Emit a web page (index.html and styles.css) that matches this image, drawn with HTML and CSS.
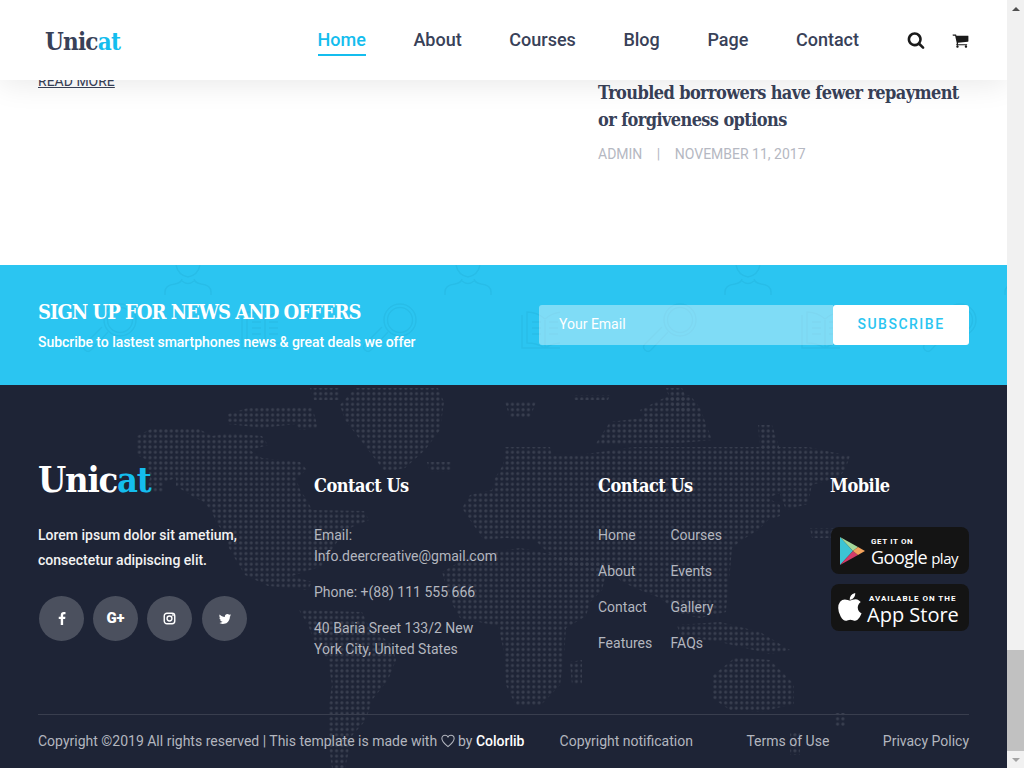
FILE: index.html
```html
<!DOCTYPE html>
<html lang="en">
<head>
    <meta charset="UTF-8">
    <title>Unicat</title>
    <link rel="stylesheet" href="styles.css">
</head>
<body>
<div class="window">
    <div class="page">
        <header class="top">
            <a class="logo">Unic<span>at</span></a>
            <ul class="nav">
                <li class="current">Home</li>
                <li>About</li>
                <li>Courses</li>
                <li>Blog</li>
                <li>Page</li>
                <li>Contact</li>
            </ul>
            <div class="top-icons">
                <svg class="ico-search" viewBox="0 0 1792 1792"><path d="M1216 832q0-185-131.500-316.500t-316.500-131.500-316.500 131.500-131.500 316.500 131.500 316.500 316.500 131.500 316.500-131.500 131.500-316.500zm512 832q0 52-38 90t-90 38q-54 0-90-38l-343-342q-179 124-399 124-143 0-273.500-55.500t-225-150-150-225-55.500-273.500 55.500-273.500 150-225 225-150 273.500-55.500 273.500 55.500 225 150 150 225 55.500 273.500q0 220-124 399l343 343q37 37 37 90z"/></svg>
                <svg class="ico-cart" viewBox="0 0 1792 1792"><path d="M704 1536q0 52-38 90t-90 38-90-38-38-90 38-90 90-38 90 38 38 90zm896 0q0 52-38 90t-90 38-90-38-38-90 38-90 90-38 90 38 38 90zm128-1088v512q0 24-16.500 42.500t-40.500 21.500l-1044 122q13 60 13 70 0 16-24 64h920q26 0 45 19t19 45-19 45-45 19h-1024q-26 0-45-19t-19-45q0-11 8-31.500t16-36 21.500-40 15.500-29.500l-177-823h-204q-26 0-45-19t-19-45 19-45 45-19h256q16 0 28.500 6.500t19.500 15.500 13 24.500 8 26 5.500 29.500 4.500 26h1201q26 0 45 19t19 45z"/></svg>
            </div>
        </header>

        <section class="news">
            <div class="news-left"><a class="more">READ MORE</a></div>
            <div class="news-right">
                <h3>Troubled borrowers have fewer repayment or forgiveness options</h3>
                <div class="meta"><span>ADMIN</span><span>|</span><span>NOVEMBER 11, 2017</span></div>
            </div>
        </section>

        <section class="signup">
            <svg class="signup-bg" width="1007" height="120">
                <defs>
                    <pattern id="tile" patternUnits="userSpaceOnUse" width="280" height="120">
                        <g fill="none" stroke="#27bde8" stroke-width="1.500">
                            <!-- person -->
                            <path d="M165 30v-3q0-7 10-8 6-1 7-5M211 30v-3q0-7-10-8-6-1-7-5M182 16q6 5 12 0M176 0q2 10 12 12q10-2 12-12"/>
                            <!-- lens -->
                            <circle cx="120" cy="55" r="16"/>
                            <circle cx="120" cy="55" r="12.500"/>
                            <path d="M108 67l-17 18q-3 3-6 0t0-6l17-17"/>
                            <!-- book -->
                            <path d="M242 50v33h46V50M265 55v28M247 78V47q10 0 18 7q8-7 18-7v31q-10 0-18 5q-8-5-18-5z"/>
                            <path d="M252 57h9M252 63h9M252 69h9M269 57h9M269 63h9M269 69h9"/>
                        </g>
                    </pattern>
                </defs>
                <rect width="1007" height="120" fill="url(#tile)"/>
            </svg>
            <div class="signup-text">
                <h2>SIGN UP FOR NEWS AND OFFERS</h2>
                <p>Subcribe to lastest smartphones news &amp; great deals we offer</p>
            </div>
            <form class="signup-form">
                <div class="email">Your Email</div>
                <div class="btn">SUBSCRIBE</div>
            </form>
        </section>

        <footer class="foot">
            <svg class="map" width="1007" height="383" viewBox="0 385 1007 383">
                <defs>
                    <pattern id="dots" patternUnits="userSpaceOnUse" x="-1.900" y="1.900" width="5.330" height="5.330">
                        <circle cx="2.665" cy="2.665" r="1.550" fill="#393f50"/>
                    </pattern>
                </defs>
                <g fill="url(#dots)">
                    <!-- north america -->
                    <path d="M151 429L199 429L212 436L228 433L262 436L268 445L250 450L262 458L300 462L307 470L296 478L300 490L307 500L312 510L364 511L369 520L352 527L340 538L330 552L322 566L292 576L312 582L308 590L268 586L245 575L237 562L229 548L224 533L216 522L212 512L204 502L192 496L176 486L176 478L164 482L163 492L146 492L150 478L147 460L137 455L137 436z"/>
                    <!-- arctic islands -->
                    <path d="M248 408L312 406L318 428L300 430L296 424L262 428L228 424L228 414z"/>
                    <path d="M310 388L340 388L340 400L314 400z"/>
                    <!-- greenland -->
                    <path d="M355 388L438 388L444 402L440 430L425 450L405 468L385 472L372 455L345 420L340 405z"/>
                    <path d="M427 462L452 462L450 472L430 472z"/>
                    <!-- south america -->
                    <path d="M299 610L362 612L368 625L392 645L396 660L388 680L372 700L366 720L350 738L348 755L345 768L332 768L328 740L328 710L332 685L328 660L314 640L308 625z"/>
                    <!-- europe and asia -->
                    <path d="M505 447L550 447L552 456L572 456L600 452L634 447L808 447L850 456L845 470L838 478L800 488L782 492L768 498L780 505L780 516L768 520L758 530L742 540L732 548L730 570L728 590L726 612L700 618L680 614L660 598L640 590L622 582L610 570L596 572L560 562L545 550L535 540L505 538L484 540L470 520L462 508L470 495L492 490L495 478L503 465z"/>
                    <path d="M810 528L852 528L850 538L812 538z"/>
                    <path d="M780 494L812 484L808 504L786 510z"/>
                    <path d="M595 445L610 422L650 417L660 445z"/>
                    <path d="M640 410L670 395L690 395L700 408L712 440L660 445z"/>
                    <path d="M758 425L772 425L780 450L760 450z"/>
                    <path d="M572 395L610 395L608 400L575 400z"/>
                    <path d="M666 388L682 388L692 412L674 412z"/>
                    <path d="M505 402L536 402L530 418L510 418z"/>
                    <!-- africa -->
                    <path d="M442 572L470 556L520 548L560 556L600 560L606 574L602 590L590 602L586 616L566 628L564 655L560 685L540 706L516 706L506 685L504 652L498 626L460 618L450 600z"/>
                    <path d="M570 662L582 660L582 685L572 685z"/>
                    <!-- islands and australia -->
                    <path d="M677 625L720 622L760 632L790 650L770 654L720 642L680 636z"/>
                    <path d="M736 657L770 660L794 684L794 704L760 712L730 710L712 698L712 676z"/>
                    <path d="M835 713L846 713L846 726L835 726z"/>
                    <path d="M790 732L800 732L800 755L790 755z"/>
                </g>
            </svg>
            <div class="foot-main">
                <div class="foot-about">
                    <a class="logo logo-big">Unic<span>at</span></a>
                    <p>Lorem ipsum dolor sit ametium,<br>consectetur adipiscing elit.</p>
                    <div class="social">
                        <a><svg viewBox="0 0 1792 1792"><path d="M1343 12v264h-157q-86 0-116 36t-30 108v189h293l-39 296h-254v759h-306v-759h-255v-296h255v-218q0-186 104-288.500t277-102.500q147 0 228 12z"/></svg></a>
                        <a class="gplus">G+</a>
                        <a><svg viewBox="0 0 24 24" fill="none" stroke="#fff" stroke-width="2.600"><rect x="2.300" y="2.300" width="19.400" height="19.400" rx="5"/><circle cx="12" cy="12" r="4.500"/><circle cx="18" cy="6" r=".6"/></svg></a>
                        <a><svg viewBox="0 0 1792 1792"><path d="M1684 408q-67 98-162 167 1 14 1 42 0 130-38 259.500t-115.500 248.500-184.500 210.500-258 146-323 54.500q-271 0-496-145 35 4 78 4 225 0 401-138-105-2-188-64.500t-114-159.500q33 5 61 5 43 0 85-11-112-23-185.500-111.500t-73.500-205.500v-4q68 38 146 41-66-44-105-115t-39-154q0-88 44-163 121 149 294.500 238.500t371.500 99.500q-8-38-8-74 0-134 94.500-228.500t228.500-94.500q140 0 236 102 109-21 200-76-35 109-138 170 95-10 190-51z"/></svg></a>
                    </div>
                </div>
                <div class="foot-col">
                    <h4>Contact Us</h4>
                    <p>Email:<br>Info.deercreative@gmail.com</p>
                    <p>Phone: +(88) 111 555 666</p>
                    <p>40 Baria Sreet 133/2 New<br>York City, United States</p>
                </div>
                <div class="foot-col">
                    <h4>Contact Us</h4>
                    <ul class="links">
                        <li>Home</li><li>Courses</li>
                        <li>About</li><li>Events</li>
                        <li>Contact</li><li>Gallery</li>
                        <li>Features</li><li>FAQs</li>
                    </ul>
                </div>
                <div class="foot-col">
                    <h4>Mobile</h4>
                    <div class="badge badge-google">
                        <svg class="play" viewBox="0 0 25 28">
                            <polygon points="0,0 13,14 0,28" fill="#3cc4d4"/>
                            <polygon points="0,0 18,10 13,14" fill="#a5d89a"/>
                            <polygon points="0,28 18,18 13,14" fill="#d43b6a"/>
                            <polygon points="18,10 25,14 18,18 13,14" fill="#f4a35c"/>
                        </svg>
                        <div class="badge-text">
                            <small>GET IT ON</small>
                            <b>Google<i>play</i></b>
                        </div>
                    </div>
                    <div class="badge badge-apple">
                        <svg class="apple" viewBox="0 0 1408 1792"><path d="M1393 1215q-39 125-123 250-129 196-257 196-49 0-140-32-86-32-151-32-61 0-142 33-81 34-132 34-152 0-301-259-147-261-147-503 0-228 113-374 113-144 284-144 72 0 177 30 104 30 138 30 45 0 143-34 102-34 173-34 119 0 213 65 52 36 104 100-79 67-114 118-65 94-65 207 0 124 69 223t158 126zm-376-1173q0 61-29 136-30 75-93 138-54 54-108 72-37 11-104 17 3-149 78-257 74-107 250-148 1 3 2.500 11t2.500 11q0 4 .5 10t.5 10z"/></svg>
                        <div class="badge-text">
                            <small>AVAILABLE ON THE</small>
                            <b>App Store</b>
                        </div>
                    </div>
                </div>
            </div>
            <div class="foot-bottom">
                <div class="copy">Copyright &copy;2019 All rights reserved | This template is made with <svg class="heart" viewBox="0 0 24 24"><path d="M12 21.500C7 17 1.500 13 1.500 7.500 1.500 4.300 4 2 7 2c2 0 4 1 5 3 1-2 3-3 5-3 3 0 5.500 2.300 5.500 5.500C22.500 13 17 17 12 21.500z"/></svg> by <b>Colorlib</b></div>
                <ul class="foot-links">
                    <li>Copyright notification</li>
                    <li>Terms of Use</li>
                    <li>Privacy Policy</li>
                </ul>
            </div>
        </footer>
    </div>
    <div class="scrollbar">
        <div class="arrow up"></div>
        <div class="track"></div>
        <div class="thumb"></div>
        <div class="arrow down"></div>
    </div>
</div>
</body>
</html>
```

FILE: styles.css
```css
* {
    padding: 0;
    margin: 0;
    list-style: none;
    border: 0;
    box-sizing: border-box;
}

body {
    overflow: hidden;
    height: 768px;
    background: #fff;
    font-family: Roboto, "Liberation Sans", sans-serif;
    font-size: 14px;
    line-height: 21px;
}

.window {
    display: flex;
    height: 768px;
}

.page {
    position: relative;
    width: 1007px;
    height: 768px;
    overflow: hidden;
}

/* top bar */
.top {
    position: absolute;
    left: 0;
    top: 0;
    z-index: 5;
    width: 1007px;
    height: 80px;
    padding: 0 38px 0 45px;
    display: flex;
    align-items: center;
    background: #fff;
    box-shadow: 0 4px 30px rgba(0, 0, 0, .09);
}

.logo {
    font-family: "DejaVu Serif Condensed", "DejaVu Serif", serif;
    font-weight: bold;
    font-size: 24px;
    letter-spacing: -.8px;
    color: #384158;
    margin-top: 2px;
}

.logo span {
    color: #14bdee;
}

.nav {
    display: flex;
    gap: 47.600px;
    margin-left: auto;
    margin-top: 1px;
}

.nav li {
    font-size: 18px;
    font-weight: 500;
    line-height: 24px;
    color: #384158;
    padding: 3px 0 2px;
    border-bottom: 2px solid transparent;
}

.nav li.current {
    color: #14bdee;
    border-bottom-color: #14bdee;
}

.top-icons {
    display: flex;
    align-items: center;
    gap: 27px;
    margin-left: 48px;
}

.ico-search {
    width: 18px;
    height: 18px;
    fill: #1a1a1a;
}

.ico-cart {
    width: 17px;
    height: 17px;
    fill: #1a1a1a;
}

/* blog leftovers */
.news {
    height: 265px;
    padding: 71px 38px 0;
    display: flex;
}

.news-left {
    width: 560px;
}

.more {
    color: #384158;
    text-decoration: underline;
}

.news-right {
    width: 371px;
    padding-top: 8px;
}

.news-right h3 {
    font-family: "DejaVu Serif Condensed", "DejaVu Serif", serif;
    font-size: 18px;
    font-weight: bold;
    line-height: 27px;
    letter-spacing: -.6px;
    color: #384158;
}

.meta {
    display: flex;
    gap: 14.500px;
    margin-top: 11px;
    color: #b5b8c2;
}

/* newsletter */
.signup {
    position: relative;
    height: 120px;
    padding: 0 38px;
    display: flex;
    align-items: center;
    justify-content: space-between;
    background: #2bc5f1;
}

.signup-bg {
    position: absolute;
    left: 0;
    top: 0;
}

.signup-text {
    position: relative;
    padding-top: 1px;
    color: #fff;
}

.signup-text h2 {
    font-family: "DejaVu Serif Condensed", "DejaVu Serif", serif;
    font-size: 20px;
    line-height: 26px;
    font-weight: bold;
    letter-spacing: -1px;
}

.signup-text p {
    font-weight: 500;
    letter-spacing: -.05px;
    margin-top: 7px;
}

.signup-form {
    position: relative;
    display: flex;
    width: 430px;
    height: 40px;
}

.email {
    flex: 1;
    padding-left: 20px;
    line-height: 38px;
    color: #fff;
    background: rgba(255, 255, 255, .4);
    border-radius: 3px 0 0 3px;
}

.btn {
    width: 136px;
    text-align: center;
    line-height: 39px;
    font-weight: 500;
    letter-spacing: 1.500px;
    color: #2bc5f1;
    background: #fff;
    border-radius: 3px;
}

/* footer */
.foot {
    position: relative;
    height: 383px;
    padding: 0 38px;
    background: #1e2436;
    color: #b3b6bf;
}

.map {
    position: absolute;
    left: 0;
    top: 0;
}

.foot-main {
    position: relative;
    height: 329px;
    padding-top: 74px;
    display: grid;
    grid-template-columns: 276px 284px 232px 139px;
}

.logo-big {
    display: block;
    font-size: 36px;
    line-height: 40px;
    letter-spacing: -1.200px;
    margin: 0;
    color: #fff;
}

.foot-about p {
    margin-top: 24px;
    line-height: 25px;
    font-weight: 500;
    color: #f2f2f2;
}

.social {
    display: flex;
    gap: 9px;
    margin: 23px 0 0 1px;
}

.social a {
    width: 45px;
    height: 45px;
    border-radius: 50%;
    background: #4b505e;
    display: flex;
    align-items: center;
    justify-content: center;
    color: #fff;
}

.social a:last-child {
    margin-left: 1px;
}

.social svg {
    width: 14px;
    height: 14px;
    fill: #fff;
}

.social a:nth-child(3) svg {
    width: 13px;
    height: 13px;
    fill: none;
}

.social .gplus {
    font-size: 15px;
    font-weight: 900;
}

.foot-col h4 {
    margin-top: 15px;
    margin-bottom: 27px;
    font-family: "DejaVu Serif Condensed", "DejaVu Serif", serif;
    font-size: 18px;
    line-height: 24px;
    font-weight: bold;
    letter-spacing: -.5px;
    color: #fff;
}

.foot-col p {
    margin-bottom: 15px;
}

.links {
    display: grid;
    grid-template-columns: 72.500px auto;
    row-gap: 15px;
}

.badge {
    display: flex;
    align-items: center;
    width: 138px;
    height: 47px;
    margin-bottom: 10px;
    margin-left: 1px;
    border-radius: 8px;
    background: #141414;
    color: #fff;
}

.foot-col h4 + .badge {
    margin-top: 29px;
}

.play {
    width: 25px;
    height: 28px;
    margin-left: 9px;
}

.apple {
    width: 24px;
    height: 30px;
    margin-left: 7px;
    fill: #fff;
}

.badge-text {
    margin-left: 6px;
    padding-top: 5px;
    line-height: 1;
}

.badge-apple .badge-text {
    margin-left: 5px;
}

.badge-text small {
    display: block;
    font-size: 8px;
    font-weight: 700;
    letter-spacing: .6px;
    line-height: 9px;
}

.badge-apple small {
    margin-left: 2px;
    letter-spacing: 1px;
}

.badge-text b {
    display: block;
    font-family: "Open Sans", sans-serif;
    font-weight: 400;
    font-size: 18px;
    line-height: 23px;
    letter-spacing: -.5px;
}

.badge-text i {
    font-style: normal;
    font-size: 15px;
    margin-left: 4px;
}

.badge-apple .badge-text b {
    font-size: 20px;
    letter-spacing: 0;
}

.foot-bottom {
    position: relative;
    display: flex;
    justify-content: space-between;
    padding-top: 16px;
    border-top: 1px solid #393e4e;
}

.copy b {
    font-weight: 500;
    color: #fff;
}

.heart {
    width: 14px;
    height: 14px;
    vertical-align: -2px;
    fill: none;
    stroke: #b3b6bf;
    stroke-width: 1.800;
}

.foot-links {
    display: flex;
    gap: 53.500px;
}

/* scrollbar drawn by hand */
.scrollbar {
    width: 17px;
    height: 768px;
    display: flex;
    flex-direction: column;
    background: #f1f1f1;
}

.arrow {
    height: 17px;
    display: flex;
    align-items: center;
    justify-content: center;
}

.arrow:after {
    content: "";
    border-left: 4px solid transparent;
    border-right: 4px solid transparent;
}

.up:after {
    border-bottom: 4px solid #505050;
}

.down:after {
    border-top: 4px solid #a3a3a3;
}

.track {
    flex: 1;
}

.thumb {
    height: 101px;
    background: #c1c1c1;
}
```
